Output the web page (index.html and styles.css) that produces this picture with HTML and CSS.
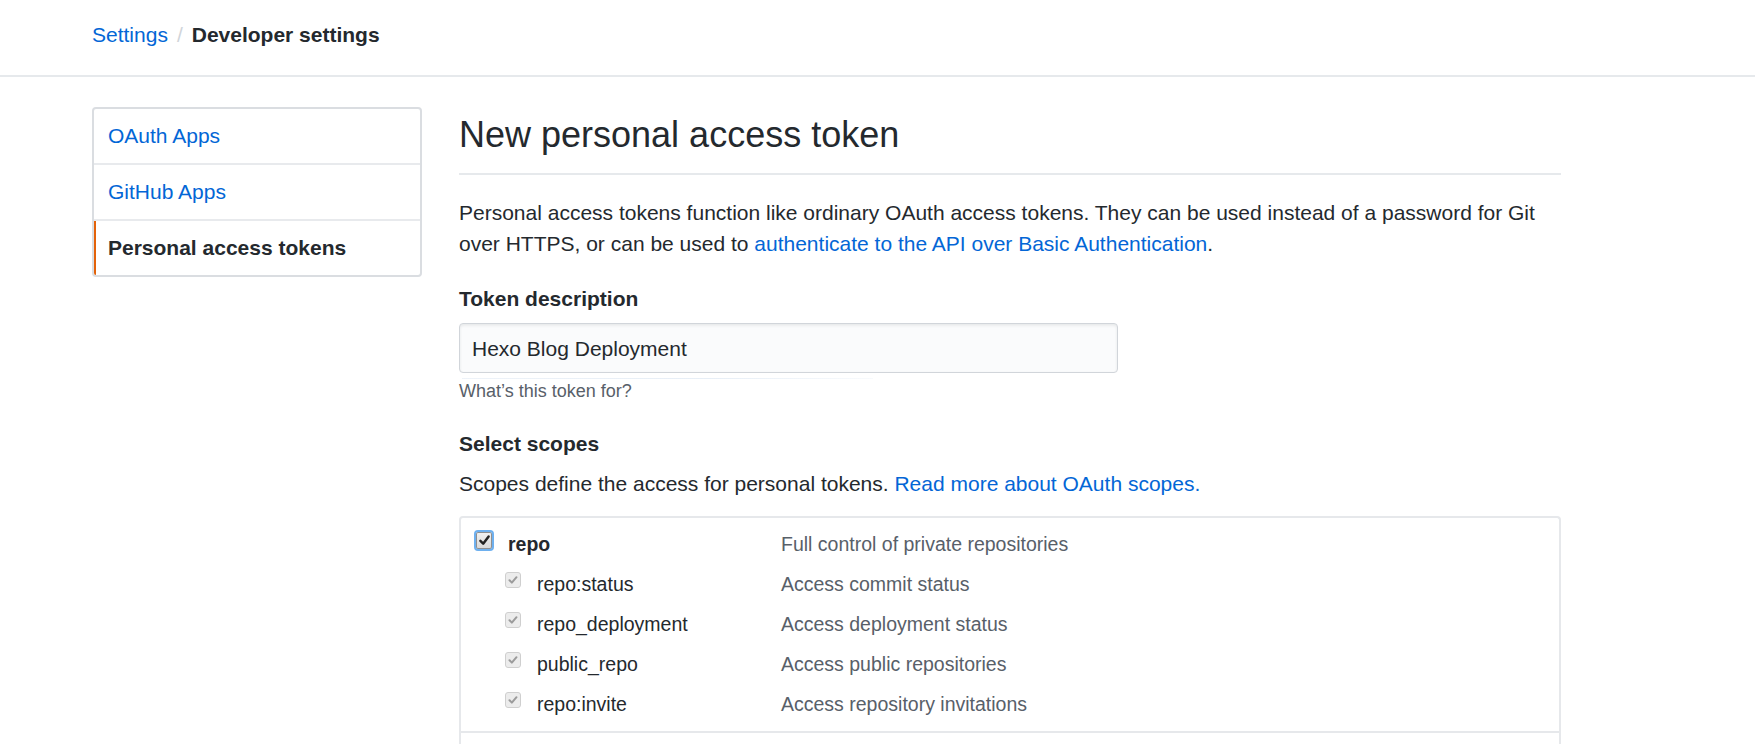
FILE: index.html
```html
<!DOCTYPE html>
<html lang="en">
<head>
<meta charset="utf-8">
<title>New personal access token</title>
<link rel="stylesheet" href="styles.css">
</head>
<body>
<header class="pagehead">
  <div class="container">
    <nav class="breadcrumb">
      <a class="crumb-link" href="#">Settings</a><span class="crumb-sep">/</span><strong class="crumb-current">Developer settings</strong>
    </nav>
  </div>
</header>

<div class="container layout">
  <aside class="sidebar">
    <nav class="menu">
      <a class="menu-item" href="#">OAuth Apps</a>
      <a class="menu-item" href="#">GitHub Apps</a>
      <a class="menu-item selected" href="#">Personal access tokens</a>
    </nav>
  </aside>

  <main class="main">
    <div class="subhead">
      <h2 class="subhead-heading">New personal access token</h2>
    </div>

    <p class="intro">Personal access tokens function like ordinary OAuth access tokens. They can be used instead of a password for Git over HTTPS, or can be used to <a href="#">authenticate to the API over Basic Authentication</a>.</p>

    <div class="form-group">
      <label class="form-label">Token description</label>
      <div class="input">Hexo Blog Deployment</div>
      <p class="note">What’s this token for?</p>
    </div>

    <h3 class="form-label scopes-title">Select scopes</h3>
    <p class="scopes-text">Scopes define the access for personal tokens. <a href="#">Read more about OAuth scopes.</a></p>

    <div class="scopes">
      <div class="scope-group">
        <div class="scope-row parent">
          <div class="scope-name">
            <span class="cb cb-main">
              <svg viewBox="0 0 16 16" width="16" height="16"><path d="M3.6 8.4 L6.6 11.4 L12.4 3.8" fill="none" stroke="#222" stroke-width="2.6" stroke-linecap="round" stroke-linejoin="round"/></svg>
            </span>
            <span class="label-strong">repo</span>
          </div>
          <div class="scope-desc">Full control of private repositories</div>
        </div>
        <div class="scope-row child">
          <div class="scope-name">
            <span class="cb cb-sub"><svg viewBox="0 0 16 16" width="16" height="16"><path d="M4 8.3 L6.7 11 L12 4.8" fill="none" stroke="#9b9b9b" stroke-width="2.3" stroke-linecap="round" stroke-linejoin="round"/></svg></span>
            <span class="label">repo:status</span>
          </div>
          <div class="scope-desc">Access commit status</div>
        </div>
        <div class="scope-row child">
          <div class="scope-name">
            <span class="cb cb-sub"><svg viewBox="0 0 16 16" width="16" height="16"><path d="M4 8.3 L6.7 11 L12 4.8" fill="none" stroke="#9b9b9b" stroke-width="2.3" stroke-linecap="round" stroke-linejoin="round"/></svg></span>
            <span class="label">repo_deployment</span>
          </div>
          <div class="scope-desc">Access deployment status</div>
        </div>
        <div class="scope-row child">
          <div class="scope-name">
            <span class="cb cb-sub"><svg viewBox="0 0 16 16" width="16" height="16"><path d="M4 8.3 L6.7 11 L12 4.8" fill="none" stroke="#9b9b9b" stroke-width="2.3" stroke-linecap="round" stroke-linejoin="round"/></svg></span>
            <span class="label">public_repo</span>
          </div>
          <div class="scope-desc">Access public repositories</div>
        </div>
        <div class="scope-row child">
          <div class="scope-name">
            <span class="cb cb-sub"><svg viewBox="0 0 16 16" width="16" height="16"><path d="M4 8.3 L6.7 11 L12 4.8" fill="none" stroke="#9b9b9b" stroke-width="2.3" stroke-linecap="round" stroke-linejoin="round"/></svg></span>
            <span class="label">repo:invite</span>
          </div>
          <div class="scope-desc">Access repository invitations</div>
        </div>
      </div>
      <div class="scope-group next"></div>
    </div>
  </main>
</div>
</body>
</html>
```

FILE: styles.css
```css
* { box-sizing: border-box; }

html, body {
  margin: 0;
  padding: 0;
  background: #fff;
}

body {
  font-family: "Liberation Sans", Arial, Helvetica, sans-serif;
  font-size: 21px;
  line-height: 31px;
  color: #24292e;
  overflow: hidden;
  height: 744px;
}

a { color: #0366d6; text-decoration: none; }

.container {
  width: 1469px;
  margin-left: 92px;
}

/* header */
.pagehead {
  padding: 19px 0 25px;
  border-bottom: 2px solid #e6e9ec;
}

.breadcrumb {
  display: flex;
  align-items: baseline;
  font-size: 21px;
  line-height: 31px;
}

.crumb-sep {
  color: #d1d5da;
  padding: 0 9px;
}

.crumb-current {
  font-weight: 700;
  color: #24292e;
}

/* layout */
.layout {
  display: flex;
  align-items: flex-start;
  gap: 37px;
  margin-top: 30px;
}

.sidebar {
  width: 330px;
  flex: none;
}

.menu {
  display: flex;
  flex-direction: column;
  border: 2px solid #dadde1;
  border-radius: 4px;
  overflow: hidden;
}

.menu-item {
  position: relative;
  display: block;
  padding: 11px 14px 12px;
  line-height: 31px;
  border-bottom: 2px solid #e8eaed;
  color: #0366d6;
}

.menu-item:last-child { border-bottom: 0; }

.menu-item.selected {
  font-weight: 700;
  color: #24292e;
}

.menu-item.selected::before {
  content: "";
  position: absolute;
  top: 0;
  bottom: 0;
  left: -1px;
  width: 3px;
  background: #e36209;
}

/* main */
.main {
  flex: 1;
  padding-top: 5px;
}

.subhead {
  padding-bottom: 16px;
  border-bottom: 2px solid #e6e9ec;
}

.subhead-heading {
  margin: 0;
  font-size: 36px;
  line-height: 45px;
  font-weight: 400;
}

.intro {
  margin: 22px 0 0;
}

.form-group {
  margin-top: 24px;
}

.form-label {
  display: block;
  margin: 0;
  font-size: 21px;
  line-height: 31px;
  font-weight: 700;
}

.input {
  margin-top: 9px;
  width: 659px;
  height: 50px;
  padding: 0 12px;
  display: flex;
  align-items: center;
  background: #fafbfc;
  border: 1px solid #d1d5da;
  border-radius: 4px;
  box-shadow: inset 0 1.5px 3px rgba(27, 31, 35, 0.09);
  color: #24292e;
}

.note {
  position: relative;
  margin: 5px 0 0;
  font-size: 18px;
  line-height: 27px;
  color: #586069;
}

.note::before {
  content: "";
  position: absolute;
  top: 0;
  left: 3px;
  width: 411px;
  height: 1px;
  background: linear-gradient(to right, rgba(226, 234, 244, 0.6), #e7eef6 60%, rgba(231, 238, 246, 0.3));
}

.scopes-title {
  margin-top: 23px;
}

.scopes-text {
  margin: 9px 0 0;
}

/* scopes */
.scopes {
  margin-top: 17px;
  border: 2px solid #e6e8eb;
  border-radius: 4px;
  border-bottom: 0;
  border-bottom-left-radius: 0;
  border-bottom-right-radius: 0;
}

.scope-group {
  padding: 6px 0 7px;
}

.scope-group.next {
  border-top: 2px solid #e6e8eb;
  height: 40px;
  padding: 0;
}

.scope-row {
  display: grid;
  grid-template-columns: 307px 1fr;
  padding-left: 13px;
  height: 40px;
  font-size: 19.5px;
  line-height: 40px;
}

.scope-name {
  display: flex;
  align-items: flex-start;
}

.child .scope-name {
  padding-left: 31px;
}

.scope-desc {
  color: #586069;
}

.label-strong {
  font-weight: 700;
  margin-left: 14px;
}

.label {
  margin-left: 16px;
}

.cb {
  flex: none;
  display: flex;
  align-items: center;
  justify-content: center;
}

.cb-main {
  width: 20px;
  height: 21px;
  margin-top: 6px;
  border: 2px solid #6eb0ef;
  border-radius: 4px;
  background: linear-gradient(#f2f2f2, #d8d8d8);
  box-shadow: inset 0 0 0 1px #8f8f8f;
}

.cb-main svg { width: 15px; height: 15px; }

.cb-sub {
  width: 16px;
  height: 16px;
  margin-top: 8px;
  border: 1px solid #cfcfcf;
  border-radius: 3px;
  background: #ececec;
}

.cb-sub svg { width: 14px; height: 14px; }
```
